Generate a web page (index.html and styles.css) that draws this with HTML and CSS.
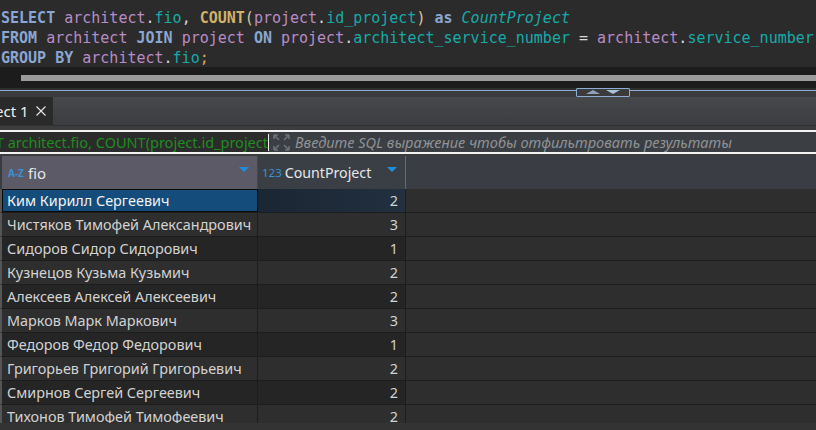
FILE: index.html
```html
<!DOCTYPE html>
<html>
<head>
<meta charset="utf-8">
<link rel="stylesheet" href="styles.css">
</head>
<body>
<div class="app">
  <div class="editor">
    <div class="ln"><span class="kw">SELECT</span> <span class="tb">architect</span><span class="pn">.</span><span class="col">fio</span><span class="pn">,</span> <span class="fn">COUNT</span><span class="par">(</span><span class="tb">project</span><span class="pn">.</span><span class="col">id_project</span><span class="par">)</span> <span class="kw">as</span> <span class="al">CountProject</span></div>
    <div class="ln"><span class="kw">FROM</span> <span class="tb">architect</span> <span class="kw">JOIN</span> <span class="tb">project</span> <span class="kw">ON</span> <span class="tb">project</span><span class="pn">.</span><span class="col">architect_service_number</span> <span class="pn">=</span> <span class="tb">architect</span><span class="pn">.</span><span class="col">service_number</span></div>
    <div class="ln"><span class="kw">GROUP BY</span> <span class="tb">architect</span><span class="pn">.</span><span class="col">fio</span><span class="semi">;</span></div>
  </div>
  <div class="hscroll"><div class="thumb"></div></div>
  <div class="splitter">
    <div class="handle">
      <svg width="53" height="8" viewBox="0 0 53 8"><polygon points="9,5 16,1 23,5" fill="#8ea3b8"/><polygon points="29,1 43,1 36,5" fill="#a9c3dc"/></svg>
    </div>
  </div>
  <div class="tabs">
    <div class="tab"><span class="tab-t">ect 1</span>
      <svg class="x" width="10" height="10" viewBox="0 0 10 10"><path d="M0.5 0.5 L9.5 9.5 M9.5 0.5 L0.5 9.5" stroke="#e8e8e8" stroke-width="1.1"/></svg>
    </div>
  </div>
  <div class="gap1"></div>
  <div class="filter">
    <div class="ftext">T architect.fio, COUNT(project.id_project</div>
    <div class="caret"></div>
    <svg class="exp" width="17" height="17" viewBox="0 0 17 17">
      <g stroke="#6c7278" stroke-width="1.6" fill="none">
        <path d="M1 1 L6 6 M1 1 L1 5 M1 1 L5 1"/>
        <path d="M16 1 L11 6 M16 1 L16 5 M16 1 L12 1"/>
        <path d="M1 16 L6 11 M1 16 L1 12 M1 16 L5 16"/>
        <path d="M16 16 L11 11 M16 16 L16 12 M16 16 L12 16"/>
      </g>
    </svg>
    <div class="ph">Введите SQL выражение чтобы отфильтровать результаты</div>
  </div>
  <div class="gap2"></div>
  <div class="grid">
    <div class="ghead">
      <div class="hc hfio"><span class="az">A-Z</span><span class="hname">fio</span><span class="tri"></span></div>
      <div class="hc hcnt"><span class="n123">123</span><span class="hname">CountProject</span><span class="tri"></span></div>
      <div class="hrest"></div>
    </div>
    <div class="gbody">
      <div class="row sel"><div class="c cfio">Ким Кирилл Сергеевич</div><div class="c ccnt">2</div><div class="crest"></div></div>
      <div class="row"><div class="c cfio">Чистяков Тимофей Александрович</div><div class="c ccnt">3</div><div class="crest"></div></div>
      <div class="row odd"><div class="c cfio">Сидоров Сидор Сидорович</div><div class="c ccnt">1</div><div class="crest"></div></div>
      <div class="row"><div class="c cfio">Кузнецов Кузьма Кузьмич</div><div class="c ccnt">2</div><div class="crest"></div></div>
      <div class="row odd"><div class="c cfio">Алексеев Алексей Алексеевич</div><div class="c ccnt">2</div><div class="crest"></div></div>
      <div class="row"><div class="c cfio">Марков Марк Маркович</div><div class="c ccnt">3</div><div class="crest"></div></div>
      <div class="row odd"><div class="c cfio">Федоров Федор Федорович</div><div class="c ccnt">1</div><div class="crest"></div></div>
      <div class="row"><div class="c cfio">Григорьев Григорий Григорьевич</div><div class="c ccnt">2</div><div class="crest"></div></div>
      <div class="row odd"><div class="c cfio">Смирнов Сергей Сергеевич</div><div class="c ccnt">2</div><div class="crest"></div></div>
      <div class="row"><div class="c cfio">Тихонов Тимофей Тимофеевич</div><div class="c ccnt">2</div><div class="crest"></div></div>
    </div>
  </div>
  <div class="footer"></div>
</div>
</body>
</html>
```

FILE: styles.css
```css
* { box-sizing: border-box; }
html, body { margin: 0; padding: 0; background: #333333; }
.app { width: 816px; height: 430px; overflow: hidden; display: flex; flex-direction: column; }

.editor { height: 67px; flex: none; background: #2b2b2b; padding: 8px 0 0 1px; font-family: "DejaVu Sans Mono", monospace; font-size: 15px; overflow: hidden; }
.ln { height: 20px; line-height: 20px; white-space: pre; }
.kw { color: #8aa6d3; font-weight: bold; }
.tb { color: #b98bc6; }
.col { color: #16aaa8; }
.pn { color: #d9d9d9; }
.fn { color: #d2b26a; font-weight: bold; }
.par { color: #dcc49a; }
.al { color: #16aaa8; font-style: italic; }
.semi { color: #d7ad5a; }

.hscroll { height: 21px; flex: none; background: #1c1c1c; padding: 8px 0 0 21px; }
.thumb { height: 6px; background: #9b9b9b; }

.splitter { height: 9px; flex: none; background: #3b3b3b; border-top: 2px solid #2e2e2e; position: relative; }
.splitter::before { content: ""; display: block; height: 1px; background: #8aaed4; }
.handle { position: absolute; left: 576px; top: -2px; width: 54px; height: 9px; border: 1px solid #8aaed4; background: #3b3b3b; border-radius: 1px; }
.handle svg { display: block; }

.tabs { height: 29px; flex: none; background: linear-gradient(#47484b, #3c3d40); display: flex; align-items: flex-end; border-bottom: 1px solid #2f3032; }
.tab { width: 53px; height: 28px; background: #2a2a2a; display: flex; align-items: center; overflow: hidden; }
.tab-t { font-family: "Noto Sans", sans-serif; font-size: 15px; color: #f0f0f0; margin-left: -5px; white-space: nowrap; }
.x { margin-left: 7px; flex: none; }

.gap1 { height: 4px; flex: none; background: #3c3c3c; }

.filter { height: 24px; flex: none; border-top: 2px solid #f2f2f2; border-bottom: 2px solid #f2f2f2; background: #3b3e42; display: flex; align-items: center; }
.ftext { width: 268px; height: 20px; background: #2b2b2b; color: #1f8c1f; font-family: "Noto Sans", sans-serif; font-size: 14.5px; line-height: 20px; white-space: nowrap; overflow: hidden; direction: rtl; text-align: left; }
.caret { width: 1px; height: 17px; background: #e8e8e8; }
.exp { margin-left: 4px; flex: none; }
.ph { margin-left: 5px; font-family: "Noto Sans", sans-serif; font-style: italic; font-size: 14.6px; color: #8f9296; white-space: nowrap; }

.gap2 { height: 2px; flex: none; background: #3c3c3c; }

.grid { height: 267px; flex: none; display: flex; flex-direction: column; overflow: hidden; }
.ghead { height: 33px; display: flex; flex: none; background: #3a3e44; border-left: 2px solid #3a3b3f; }
.hc { height: 33px; display: flex; align-items: center; position: relative; font-family: "Noto Sans", sans-serif; font-size: 14.2px; color: #e6e6e6; }
.hfio { width: 256px; background: #5c5a66; border-right: 1px solid #45474c; padding-left: 6px; font-size: 15px; }
.hcnt { width: 148px; background: #3a3f46; border-right: 1px solid #676a6e; padding-left: 4px; }
.hrest { flex: 1; }
.az { font-size: 10px; font-weight: bold; color: #3a90d6; margin-right: 4px; }
.n123 { font-size: 11.5px; color: #3a90d6; margin-right: 3px; }
.tri { position: absolute; right: 8px; top: 11px; width: 0; height: 0; border-left: 5px solid transparent; border-right: 5px solid transparent; border-top: 5px solid #1a90dc; }

.gbody { flex: 1; overflow: hidden; background: #2e2e2e; }
.row { height: 24px; display: flex; border-bottom: 1px solid #1d1d1d; background: #2e2e2e; border-left: 2px solid #555; }
.row.odd .cfio, .row.odd .ccnt { background: #252525; }
.c { height: 23px; line-height: 23px; font-family: "Noto Sans", sans-serif; font-size: 14.4px; color: #d2d2d2; white-space: nowrap; overflow: hidden; }
.cfio { width: 256px; padding-left: 5px; border-right: 1px solid #1d1d1d; }
.ccnt { width: 148px; text-align: right; padding-right: 7px; border-right: 1px solid #1d1d1d; }
.crest { flex: 1; }
.row.sel .cfio { background: #144c7b; border: 1px solid #0b0b0b; color: #f2f2f2; padding-left: 4px; line-height: 21px; }
.row.sel .ccnt { background: linear-gradient(90deg, #1b2633, #22303f); }

.footer { flex: 1; background: #333333; }
```
